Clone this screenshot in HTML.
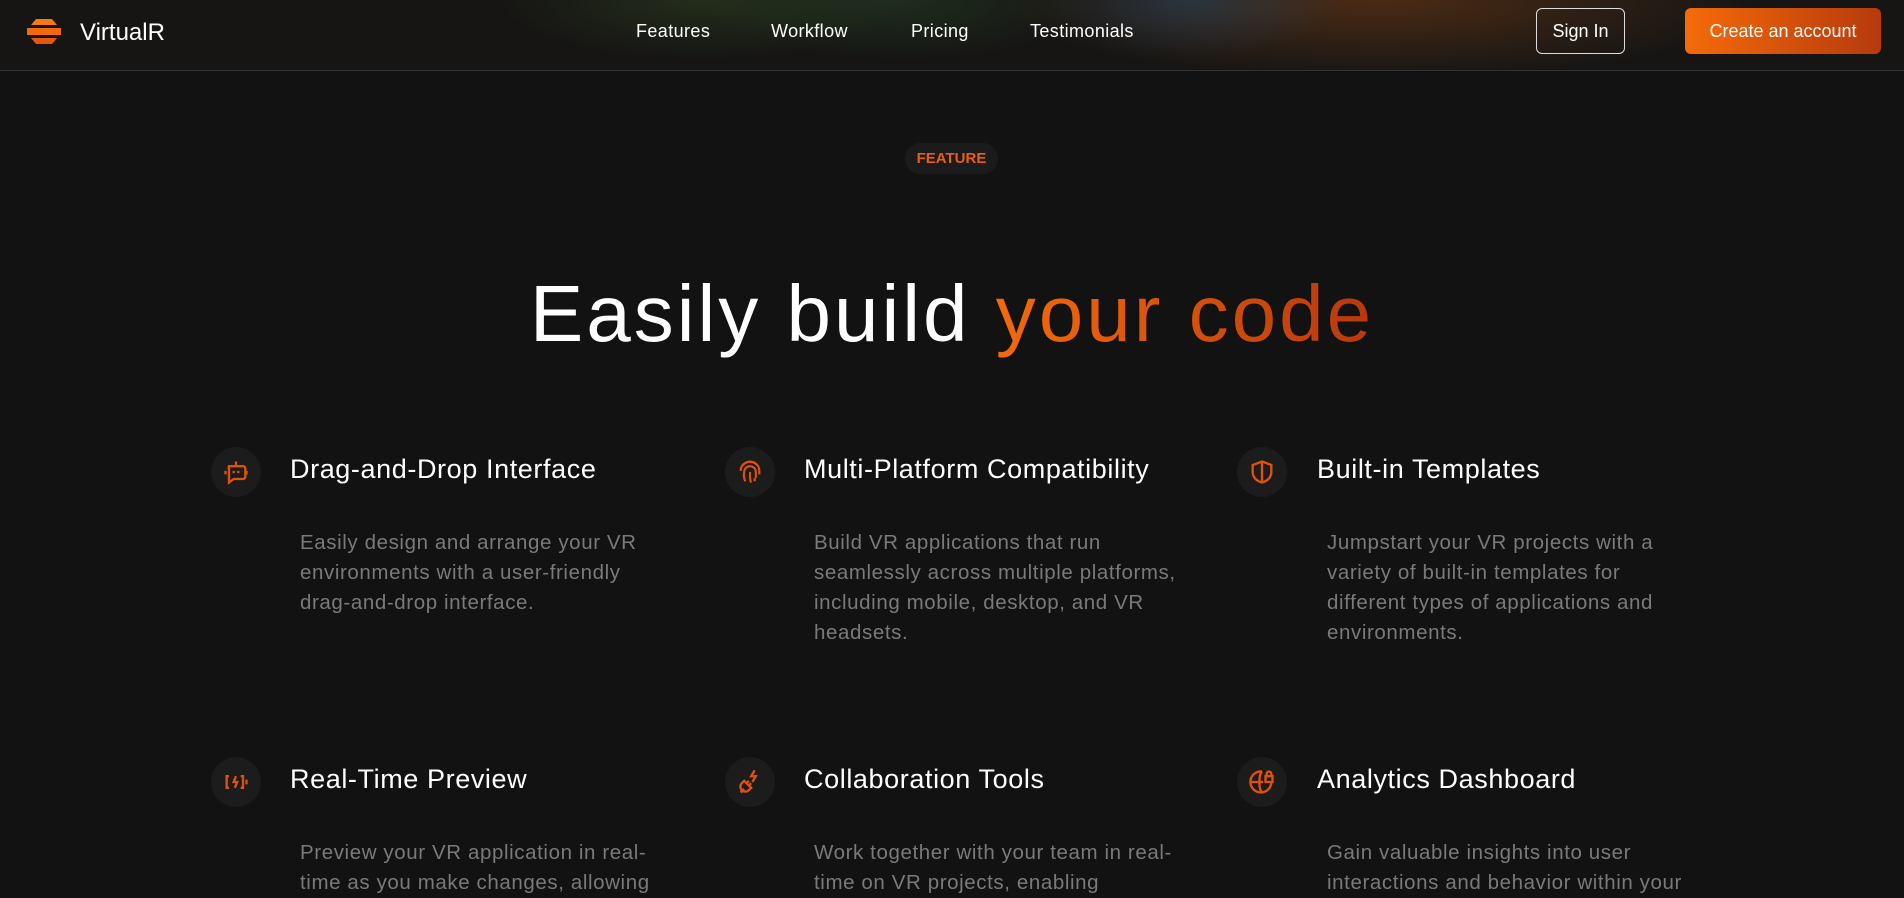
<!DOCTYPE html>
<html><head><meta charset="utf-8"><style>
*{margin:0;padding:0;box-sizing:border-box}
body{width:1904px;height:893px;overflow:hidden;background:#121212;font-family:"Liberation Sans",sans-serif;color:#fff;position:relative}
.nav{position:absolute;left:0;top:0;width:1904px;height:71px;border-bottom:1px solid #333;background:radial-gradient(ellipse 200px 60px at 700px 0,rgba(60,90,40,.35),transparent),radial-gradient(ellipse 200px 60px at 900px 0,rgba(50,100,50,.3),transparent),radial-gradient(ellipse 150px 60px at 1190px 0,rgba(30,90,140,.35),transparent),radial-gradient(ellipse 380px 80px at 1380px 0,rgba(140,70,20,.45),transparent),#161514}
.logo{position:absolute;left:24px;top:17px}
.brand{position:absolute;left:80px;top:19px;font-size:24px}
.link{position:absolute;top:21px;font-size:18px;letter-spacing:.4px}
.btn{position:absolute;top:8px;height:46px;border-radius:6px;font-size:18px;display:flex;align-items:center;justify-content:center}
.pill{position:absolute;left:905px;top:143px;width:93px;height:31px;border-radius:16px;background:#1b1b1b;color:#e8600e;font-size:15px;font-weight:bold;display:flex;align-items:center;justify-content:center}
h1{position:absolute;left:0;width:1904px;top:268px;text-align:center;font-weight:normal;font-size:80px;letter-spacing:3px}
h1 span{background:linear-gradient(90deg,#f36a0a,#b8380c);-webkit-background-clip:text;color:transparent}
.ic{position:absolute;width:50px;height:50px;border-radius:50%;background:#1c1c1c;display:flex;align-items:center;justify-content:center}
.t{position:absolute;font-size:27px;letter-spacing:.6px}
.d{position:absolute;font-size:20.5px;line-height:30px;color:#7a7a7a;width:480px;letter-spacing:.6px}
</style></head><body>
<div class="nav">
<svg class="logo" width="40" height="30" viewBox="0 0 40 30"><path d="M12 2h16l5 6H7z" fill="#f57a10"/><path d="M3 11h34v7H3z" fill="#f26a0c"/><path d="M7 21h26l-5 6H12z" fill="#e8560b"/></svg>
<div class="brand">VirtualR</div>
<div class="link" style="left:636px">Features</div>
<div class="link" style="left:771px">Workflow</div>
<div class="link" style="left:911px">Pricing</div>
<div class="link" style="left:1030px">Testimonials</div>
<div class="btn" style="left:1536px;width:89px;border:1px solid #ddd">Sign In</div>
<div class="btn" style="left:1685px;width:196px;background:linear-gradient(90deg,#f56b0a,#b63a0c)">Create an account</div>
</div>
<div class="pill">FEATURE</div>
<h1>Easily build <span>your code</span></h1>

<div class="ic" style="left:211px;top:447px"><svg width="28" height="28" viewBox="0 0 24 24" fill="none" stroke="#e0520c" stroke-width="2"><path d="M12 3v4M6 7h12a2 2 0 0 1 2 2v7a2 2 0 0 1-2 2H10l-4 3V9a2 2 0 0 1 0-2z"/><path d="M10 11v2M14 11v2M3 11v3M21 11v3"/></svg></div>
<div class="t" style="left:290px;top:454px">Drag-and-Drop Interface</div>
<div class="d" style="left:300px;top:528px">Easily design and arrange your VR<br>environments with a user-friendly<br>drag-and-drop interface.</div>

<div class="ic" style="left:725px;top:447px"><svg width="28" height="28" viewBox="0 0 24 24" fill="none" stroke="#e0520c" stroke-width="1.8"><path d="M6 6a8 8 0 0 1 12 0M4 11a8 8 0 0 1 16 0v3M8 20a12 12 0 0 1-1-8 5 5 0 0 1 10 0v5M12 12v5a10 10 0 0 0 1 4M16 17v3"/></svg></div>
<div class="t" style="left:804px;top:454px">Multi-Platform Compatibility</div>
<div class="d" style="left:814px;top:528px">Build VR applications that run<br>seamlessly across multiple platforms,<br>including mobile, desktop, and VR<br>headsets.</div>

<div class="ic" style="left:1237px;top:447px"><svg width="28" height="28" viewBox="0 0 24 24" fill="none" stroke="#e0520c" stroke-width="2"><path d="M12 3l8 3v6c0 5-4 8-8 9-4-1-8-4-8-9V6z M12 3v18"/></svg></div>
<div class="t" style="left:1317px;top:454px">Built-in Templates</div>
<div class="d" style="left:1327px;top:528px">Jumpstart your VR projects with a<br>variety of built-in templates for<br>different types of applications and<br>environments.</div>

<div class="ic" style="left:211px;top:757px"><svg width="28" height="28" viewBox="0 0 24 24" fill="none" stroke="#e0520c" stroke-width="2"><path d="M6 7H4v10h2M16 7h2v10h-2M21 10v4M12 7l-2 5h3l-2 5"/></svg></div>
<div class="t" style="left:290px;top:764px">Real-Time Preview</div>
<div class="d" style="left:300px;top:838px">Preview your VR application in real-<br>time as you make changes, allowing</div>

<div class="ic" style="left:725px;top:757px"><svg width="28" height="28" viewBox="0 0 24 24" fill="none" stroke="#e0520c" stroke-width="2"><path d="M16 2l-3 5h4l-3 5M4 21l3-3M7 11l6 6-2 2a4 4 0 0 1-6-6zM9 13l2-2M11 15l2-2"/></svg></div>
<div class="t" style="left:804px;top:764px">Collaboration Tools</div>
<div class="d" style="left:814px;top:838px">Work together with your team in real-<br>time on VR projects, enabling</div>

<div class="ic" style="left:1237px;top:757px"><svg width="28" height="28" viewBox="0 0 24 24" fill="none" stroke="#e0520c" stroke-width="2"><path d="M20 13a9 9 0 1 1-8-10M3 12h10M12 3c-3 3-3 15 0 18M15 7h6v5h-6zM16 7V5a2 2 0 0 1 4 0v2"/></svg></div>
<div class="t" style="left:1317px;top:764px">Analytics Dashboard</div>
<div class="d" style="left:1327px;top:838px">Gain valuable insights into user<br>interactions and behavior within your</div>
</body></html>
